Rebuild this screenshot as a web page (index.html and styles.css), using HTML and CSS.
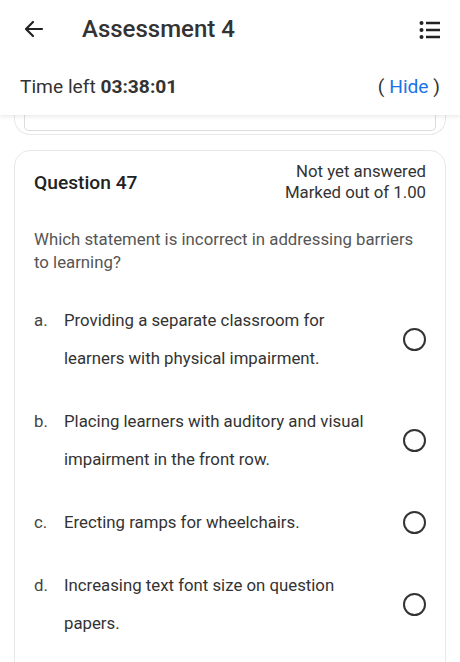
FILE: index.html
```html
<!DOCTYPE html>
<html>
<head>
<meta charset="utf-8">
<link rel="stylesheet" href="styles.css">
</head>
<body>
<div class="top">
  <header class="appbar">
    <svg class="back" width="24" height="24" viewBox="0 0 24 24"><path d="M20 12H5M11 5l-7 7 7 7" fill="none" stroke="#222" stroke-width="2.2" stroke-linecap="round" stroke-linejoin="round"/></svg>
    <h1 class="title">Assessment 4</h1>
    <svg class="menu" width="24" height="24" viewBox="0 0 24 24"><circle cx="3.5" cy="5" r="2" fill="#222"/><circle cx="3.5" cy="12" r="2" fill="#222"/><circle cx="3.5" cy="19" r="2" fill="#222"/><path d="M8 5h14M8 12h14M8 19h14" stroke="#222" stroke-width="2.6"/></svg>
  </header>
  <div class="timer">
    <span>Time left <b>03:38:01</b></span>
    <span class="hide">( <a>Hide</a> )</span>
  </div>
</div>
<div class="prev"><div class="prev-inner"></div></div>
<section class="card">
  <div class="qhead">
    <h2 class="qno">Question 47</h2>
    <div class="qinfo">Not yet answered<br>Marked out of 1.00</div>
  </div>
  <p class="qtext">Which statement is incorrect in addressing barriers to learning?</p>
  <div class="opts">
    <div class="opt"><span class="let">a.</span><span class="txt">Providing a separate classroom for learners with physical impairment.</span><span class="radio"></span></div>
    <div class="opt"><span class="let">b.</span><span class="txt">Placing learners with auditory and visual impairment in the front row.</span><span class="radio"></span></div>
    <div class="opt"><span class="let">c.</span><span class="txt">Erecting ramps for wheelchairs.</span><span class="radio"></span></div>
    <div class="opt"><span class="let">d.</span><span class="txt">Increasing text font size on question papers.</span><span class="radio"></span></div>
  </div>
</section>
</body>
</html>
```
FILE: styles.css
```css
* { box-sizing: border-box; }
html, body { margin: 0; padding: 0; background: #fff; }
body { font-family: Roboto, "Noto Sans", sans-serif; color: #333; width: 460px; height: 662px; overflow: hidden; }
.top { position: relative; z-index: 2; background: #fff; box-shadow: 0 2px 4px rgba(0,0,0,0.08); }
.appbar { height: 58px; display: flex; align-items: center; padding: 0 18px 0 22px; }
.back { flex: none; }
.title { margin: 0 0 0 36px; font-size: 24px; font-weight: 500; color: #333; flex: 1; }
.menu { flex: none; margin-top: 2px; }
.timer { height: 57px; display: flex; align-items: center; justify-content: space-between; padding: 0 20px 0 20px; font-size: 19.2px; color: #333; }
.timer b { font-weight: 700; }
.hide a { color: #1a73e8; }
.prev { margin: -2px 14px 0; height: 22px; border: 1px solid #e8e8e8; border-top: 0; border-radius: 0 0 16px 16px; padding: 0 9px 3px; }
.prev-inner { height: 100%; border: 1px solid #dcdcdc; border-top: 0; border-radius: 0 0 5px 5px; }
.card { margin: 15px 14px 0; border: 1px solid #e8e8e8; border-radius: 16px; padding: 10px 19px 30px; min-height: 600px; }
.qhead { display: flex; justify-content: space-between; align-items: center; }
.qno { margin: 0; font-size: 19.2px; font-weight: 500; color: #222; }
.qinfo { text-align: right; font-size: 16.8px; line-height: 21px; color: #333; }
.qtext { margin: 25px 0 0; font-size: 16.8px; line-height: 23px; color: #555; }
.opts { margin-top: 27px; display: flex; flex-direction: column; gap: 25px; }
.opt { display: flex; align-items: center; font-size: 16.8px; line-height: 38px; color: #333; }
.let { width: 30px; flex: none; align-self: flex-start; color: #444; }
.txt { flex: 1; padding-right: 28px; }
.radio { flex: none; width: 23px; height: 23px; border: 2px solid #333; border-radius: 50%; }
```
